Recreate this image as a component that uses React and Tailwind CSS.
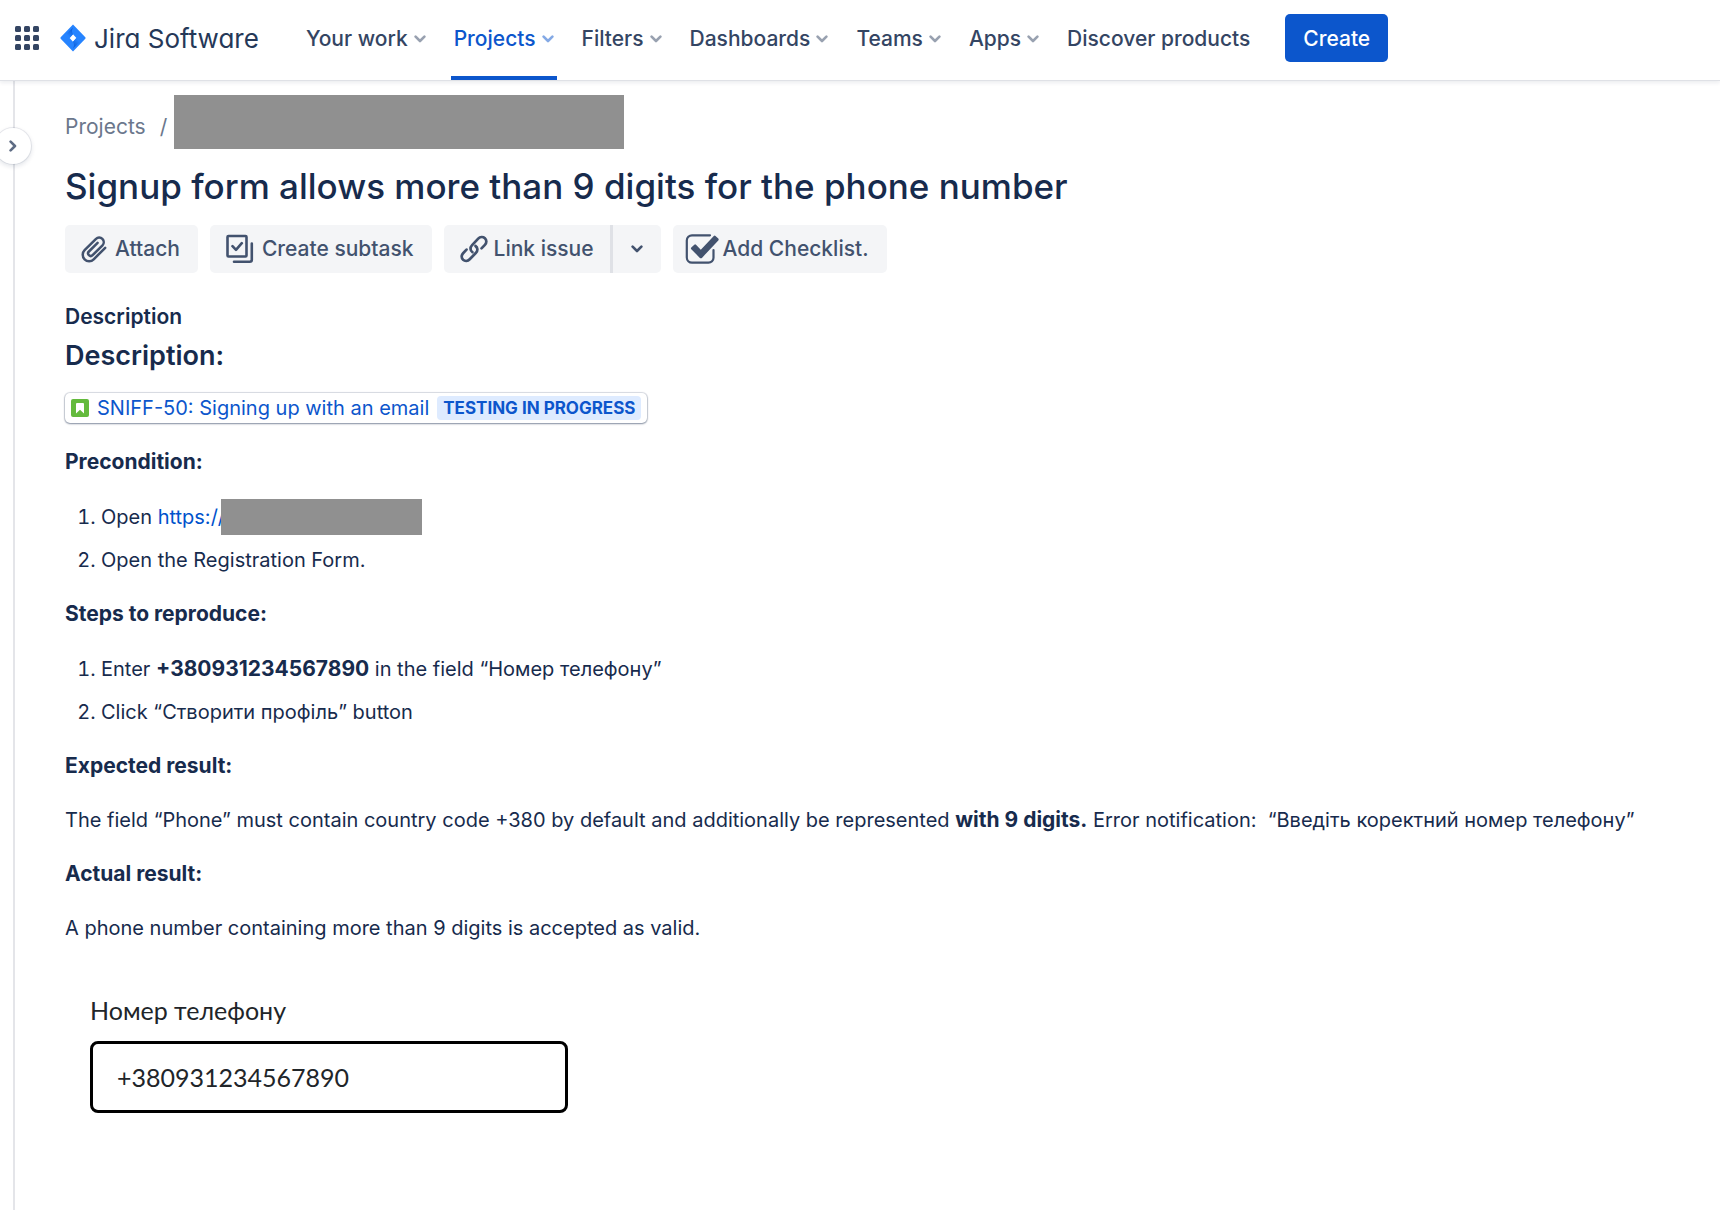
import React from "react";

const NAV = [
  { label: "Your work", menu: true },
  { label: "Projects", menu: true, active: true },
  { label: "Filters", menu: true },
  { label: "Dashboards", menu: true },
  { label: "Teams", menu: true },
  { label: "Apps", menu: true },
  { label: "Discover products" },
];

function Chevron({ className }) {
  return (
    <svg viewBox="0 0 12 8" className={className} fill="none" stroke="currentColor" strokeWidth="2.6" strokeLinecap="round" strokeLinejoin="round" aria-hidden="true">
      <path d="M1.6 1.6 6 6l4.400-4.400" />
    </svg>
  );
}

function AppsGrid() {
  const steps = [0, 9, 18];
  return (
    <svg viewBox="0 0 24 24" className="size-6" fill="#344563" aria-hidden="true">
      {steps.map((y) => steps.map((x) => <rect key={x + "-" + y} x={x} y={y} width="6" height="6" rx="1.5" />))}
    </svg>
  );
}

function JiraMark() {
  return (
    <svg viewBox="0 0 26 28" className="h-7 w-[26px]" aria-hidden="true">
      <defs>
        <linearGradient id="up" x1="13" y1="4" x2="7" y2="11" gradientUnits="userSpaceOnUse">
          <stop offset="0.1" stopColor="#0b5cd6" />
          <stop offset="1" stopColor="#2684ff" />
        </linearGradient>
        <linearGradient id="down" x1="13" y1="24" x2="19" y2="17" gradientUnits="userSpaceOnUse">
          <stop offset="0.1" stopColor="#0b5cd6" />
          <stop offset="1" stopColor="#2684ff" />
        </linearGradient>
      </defs>
      <path fill="#2684ff" fillRule="evenodd" d="M13 .5 25.300 13.200q.7.800 0 1.600L13 27.500.700 14.800q-.7-.8 0-1.600zM13 10.300 9.600 14l3.400 3.700 3.400-3.700z" />
      <path fill="url(#up)" d="M13 10.300 9.600 14 6 10.300 13 3.500q-2 3.400 0 6.800z" />
      <path fill="url(#down)" d="M13 17.700 16.400 14l3.600 3.700-7 6.800q2-3.400 0-6.800z" />
    </svg>
  );
}

function PaperclipIcon() {
  return (
    <svg viewBox="0 0 26 28" className="h-7 w-[26px]" fill="none" stroke="currentColor" strokeWidth="2.500" strokeLinecap="round" strokeLinejoin="round" aria-hidden="true">
      <path d="M24.200 12.800 12.700 24.300A6.400 6.400 0 0 1 3.600 15.200L15 3.800a4.600 4.600 0 0 1 6.500 6.500L11.600 20.200a2.600 2.600 0 0 1-3.700-3.700l8.700-8.700" />
    </svg>
  );
}

function SubtaskIcon() {
  return (
    <svg viewBox="0 0 28 30" className="h-[30px] w-7" fill="none" stroke="currentColor" strokeWidth="2.600" strokeLinecap="round" strokeLinejoin="round" aria-hidden="true">
      <rect x="1.500" y="2" width="19" height="20.500" rx="1" />
      <path d="m6.500 12.200 3.500 3.600 5.800-6.600M25.800 9.500v16.300a2 2 0 0 1-2 2H8" />
    </svg>
  );
}

function LinkIcon() {
  return (
    <svg viewBox="0 0 28 28" className="size-7" fill="none" stroke="currentColor" strokeWidth="2.700" strokeLinecap="round" strokeLinejoin="round" aria-hidden="true">
      <path d="M12.400 17.200c-2.300-1.500-2.500-4.800-.5-6.800l6.300-6.700c1.900-2 4.800-2.200 6.700-.5 1.900 1.800 1.900 4.700 0 6.700l-3.400 3.500" />
      <path d="M15.500 11c2.300 1.500 2.500 4.800.5 6.800l-6.300 6.500c-1.900 2-4.700 2.200-6.600.5-1.900-1.800-1.900-4.600 0-6.600l3.400-3.600" />
    </svg>
  );
}

function ChecklistIcon() {
  return (
    <svg viewBox="0 0 34 32" className="h-8 w-[34px]" aria-hidden="true">
      <path d="M25 2.300H7A5.200 5.200 0 0 0 1.800 7.500v17A5.200 5.200 0 0 0 7 29.700h16.500a5 5 0 0 0 5-5V17" fill="none" stroke="currentColor" strokeWidth="2.200" strokeLinecap="round" />
      <path d="m6.300 14.600 3-2.900q.9-.7 1.700.1l4.800 5L28.800 3q.8-.8 1.700 0l2.800 2.600q.8.900 0 1.800L16.900 24.900q-1 .9-2 0l-8.600-8.600q-.8-.9 0-1.700z" fill="currentColor" />
    </svg>
  );
}

function StoryIcon() {
  return (
    <svg viewBox="0 0 18 18" className="size-[18px] shrink-0" aria-hidden="true">
      <rect width="18" height="18" rx="2" fill="#63ba3c" />
      <path fill="#fff" d="M5 5A1 1 0 0 1 6 4h6a1 1 0 0 1 1 1v9.500L9 10.800 5 14.500z" />
    </svg>
  );
}

const toolButton = "flex h-12 items-center rounded-[5px] bg-[#f4f5f7] text-[21px] font-medium text-[#42526e]";

function Header() {
  return (
    <header className="relative z-10 flex h-[81px] items-center border-b border-[#dfe1e6] bg-white pl-[15px] text-[21px] font-medium text-[#344563] shadow-[0_2px_4px_rgba(9,30,66,0.08)]">
      <button type="button" aria-label="Switch to" className="mt-[-4px]"><AppsGrid /></button>
      <a href="#home" className="mt-[-4px] ml-[21px] flex items-center gap-2 text-[26px] font-normal text-[#253858]">
        <JiraMark />
        <span className="[font-feature-settings:'cv11']">Jira Software</span>
      </a>
      <nav className="ml-11 flex h-full gap-[22px]">
        {NAV.map(({ label, menu, active }) => (
          <button
            key={label}
            type="button"
            className={
              active
                ? "flex h-full items-center gap-1.5 rounded-t-xs border-b-4 border-[#0c56cc] px-[3px] pt-0.5 text-[#0c56cc]"
                : "flex h-full items-center gap-1.5 border-b-4 border-transparent px-[3px] pt-0.5"
            }
          >
            {label}
            {menu && <Chevron className="h-2 w-3 opacity-50" />}
          </button>
        ))}
      </nav>
      <button type="button" className="mt-[-4px] ml-8 h-12 rounded-[5px] bg-[#0c56cc] px-[18px] pt-0.5 text-white">Create</button>
    </header>
  );
}

function Toolbar() {
  return (
    <div className="mt-4 flex gap-3">
      <button type="button" className={toolButton + " gap-2 pr-[18px] pl-4"}><PaperclipIcon />Attach</button>
      <button type="button" className={toolButton + " gap-2 pr-[18px] pl-4"}><SubtaskIcon />Create subtask</button>
      <div className="flex">
        <button type="button" className={toolButton + " gap-1.5 rounded-r-none pr-4 pl-4"}><LinkIcon />Link issue</button>
        <button type="button" aria-label="More link options" className={toolButton + " rounded-l-none border-l-3 border-[#dfe1e6] px-[18px]"}>
          <Chevron className="h-2 w-3" />
        </button>
      </div>
      <button type="button" className={toolButton + " gap-1 pr-[18px] pl-3"}><ChecklistIcon />Add Checklist.</button>
    </div>
  );
}

function Heading({ children }) {
  return <h3 className="text-[21px] leading-9 font-bold">{children}</h3>;
}

function Steps({ children }) {
  return <ol className="list-decimal space-y-[7px] pt-px pl-9">{children}</ol>;
}

function Strong({ children }) {
  return <b className="text-[21px]">{children}</b>;
}

export default function App() {
  return (
    <div className="flex min-h-screen flex-col bg-white font-['Inter','Noto_Sans',sans-serif] text-[#172b4d]">
      <Header />
      <div className="flex grow">
        <aside className="relative w-[15px] shrink-0 border-r-2 border-[#e4e5e9]">
          <button type="button" aria-label="Expand sidebar" className="absolute top-[47px] left-[-5px] flex size-9 items-center justify-center rounded-full bg-white text-[#5e6c84] shadow-[0_0_0_1px_rgba(9,30,66,0.08),0_2px_4px_1px_rgba(9,30,66,0.1)]">
            <Chevron className="h-2 w-3 -rotate-90" />
          </button>
        </aside>
        <main className="min-w-0 grow pt-3.5 pr-6 pb-12 pl-[50px]">
          <nav aria-label="Breadcrumb" className="flex h-[54px] items-center text-[21px] text-[#6b778c]">
            <a href="#projects" className="mt-2.5">Projects</a>
            <span className="mt-2.5 ml-3.5">/</span>
            <span className="ml-[7px] h-full w-[450px] bg-[#909090]" />
          </nav>
          <h1 className="mt-[15px] mb-[17px] text-[35px] leading-11 font-medium">Signup form allows more than 9 digits for the phone number</h1>
          <Toolbar />

          <section className="mt-[26px] text-xl leading-9">
            <h2 className="text-[21px] leading-9 font-semibold">Description</h2>
            <h2 className="mt-[3px] text-[27px] leading-9 font-semibold">Description:</h2>
            <p className="mt-4 flex h-9 items-center">
              <a href="#SNIFF-50" className="flex h-[30px] items-center gap-2 rounded-[5px] px-[6px] text-[#0c56cc] shadow-[0_1px_2px_rgba(9,30,66,0.4),0_0_1px_1px_rgba(9,30,66,0.15)]">
                <StoryIcon />
                SNIFF-50: Signing up with an email
                <span className="rounded-[4px] bg-[#deebff] px-[6px] text-[17px] leading-6 font-bold">TESTING IN PROGRESS</span>
              </a>
            </p>
            <div className="mt-[18px] space-y-[18px]">
              <Heading>Precondition:</Heading>
              <Steps>
                <li>
                  <span className="flex items-center">
                    Open&nbsp;<a href="#signup" className="text-[#0052cc]">https://</a>
                    <span className="relative -ml-1 h-9 w-[201px] bg-[#909090]" />
                  </span>
                </li>
                <li>Open the Registration Form.</li>
              </Steps>
              <Heading>Steps to reproduce:</Heading>
              <Steps>
                <li>Enter <Strong>+380931234567890</Strong> in the field “Номер телефону”</li>
                <li>Click “Створити профіль” button</li>
              </Steps>
              <Heading>Expected result:</Heading>
              <p>
                The field “Phone” must contain country code +380 by default and additionally be represented <Strong>with 9 digits.</Strong> Error notification: &nbsp;“Введіть коректний номер телефону”
              </p>
              <Heading>Actual result:</Heading>
              <p>A phone number containing more than 9 digits is accepted as valid.</p>
            </div>
          </section>

          <div className="mt-[46px] ml-[25px] flex max-w-[478px] flex-col gap-[13px] font-['Lato','Noto_Sans',sans-serif] text-[25px] leading-9 text-[#212529]">
            <label htmlFor="phone">Номер телефону</label>
            <input id="phone" type="tel" defaultValue="+380931234567890" className="h-[72px] rounded-lg border-3 border-black px-6 outline-none" />
          </div>
        </main>
      </div>
    </div>
  );
}
